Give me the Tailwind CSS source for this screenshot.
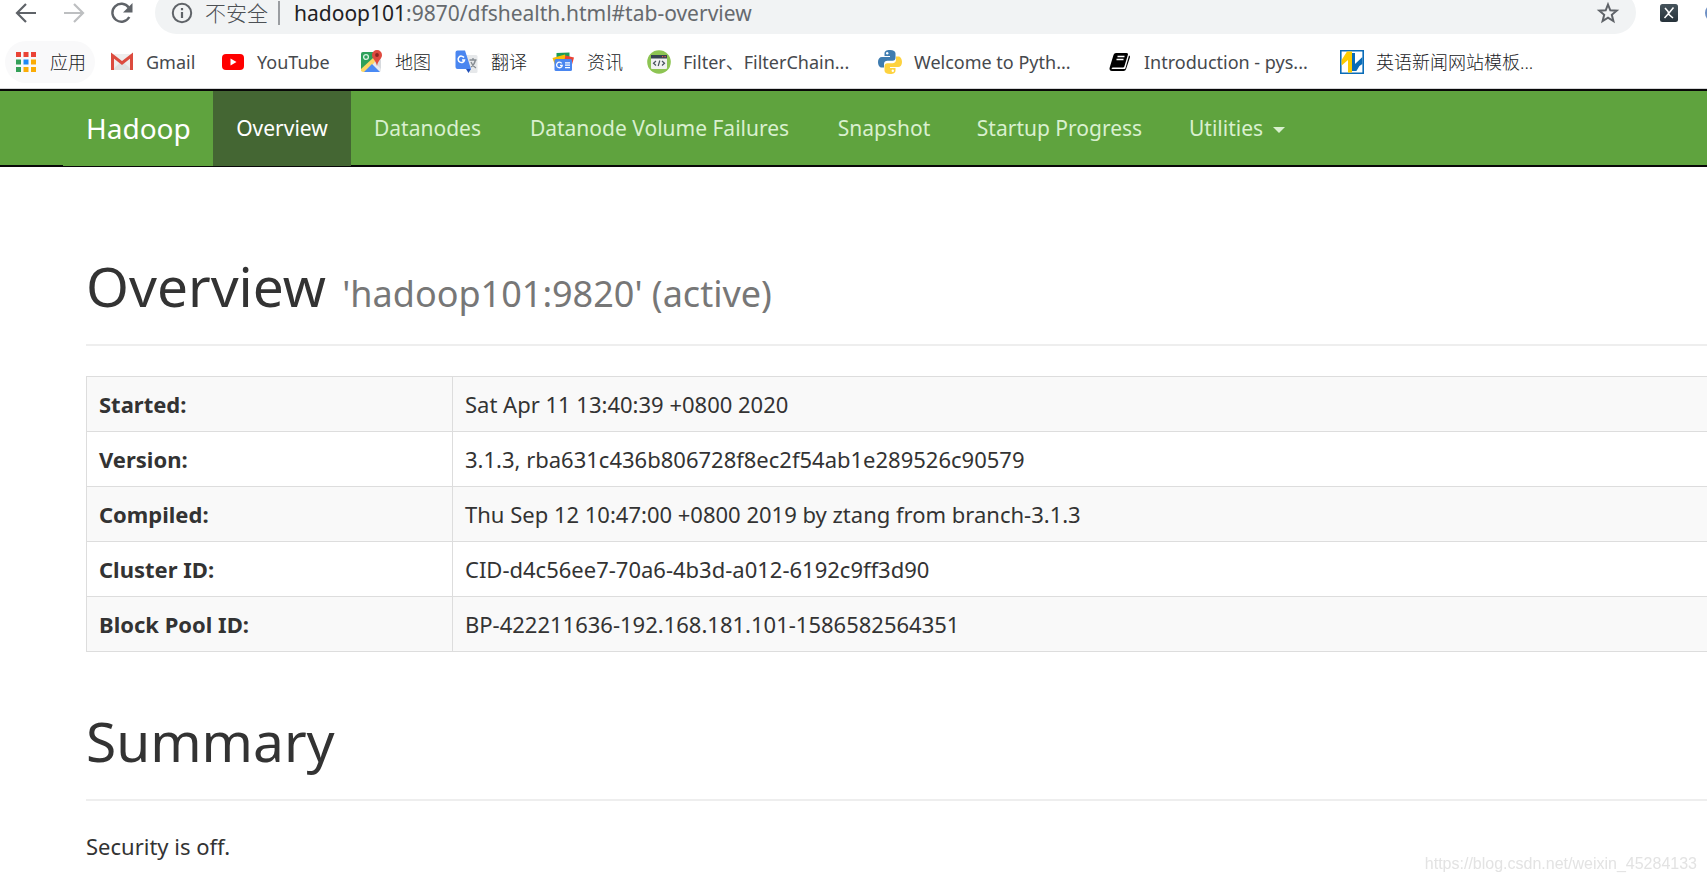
<!DOCTYPE html>
<html lang="en">
<head>
<meta charset="utf-8">
<title>Namenode information</title>
<script src="https://cdn.jsdelivr.net/npm/@tailwindcss/browser@4"></script>
</head>
<body class="min-h-screen overflow-x-hidden bg-white font-['Noto_Sans','Noto_Sans_CJK_SC',sans-serif] text-[21px] leading-[28px] text-[#333]">

<!-- Browser toolbar -->
<header class="overflow-hidden border-b border-[#d5d6d8]">
  <div class="flex h-[34px] items-end">
    <div class="flex h-[43px] w-[155px] shrink-0 items-center gap-6 pl-[14px]">
      <button aria-label="Back" class="size-6"><svg viewBox="0 0 24 24" class="size-6" fill="none" stroke="#5f6368" stroke-width="2.2"><path d="M22 12H3.500M12 3l-9 9 9 9"/></svg></button>
      <button aria-label="Forward" class="size-6"><svg viewBox="0 0 24 24" class="size-6" fill="none" stroke="#bdbfc1" stroke-width="2.200"><path d="M2 12h18.500M12 3l9 9-9 9"/></svg></button>
      <button aria-label="Reload" class="size-6"><svg viewBox="0 0 24 24" class="size-6"><path d="M19.300 16a9 9 0 1 1-.6-9.500" fill="none" stroke="#5f6368" stroke-width="2.400"/><path d="M22.500 2v9.500H13z" fill="#5f6368"/></svg></button>
    </div>
    <div class="flex h-[43px] flex-1 items-center rounded-full bg-[#f1f3f4] pl-4 pr-4">
      <svg viewBox="0 0 22 22" class="mr-3 size-[22px] shrink-0" fill="none" stroke="#5f6368" stroke-width="2"><circle cx="11" cy="11" r="9.200"/><path d="M11 10v6M11 6v2.200" stroke-width="2.200"/></svg>
      <span class="font-light text-[#4c5054]">不安全</span>
      <span class="mr-[14px] ml-[10px] h-6 w-[2px] bg-[#9a9da1]"></span>
      <span class="text-[#666a6e]"><span class="text-[#202124]">hadoop101</span>:9870/dfshealth.html#tab-overview</span>
      <button aria-label="Bookmark this page" class="ml-auto size-6"><svg viewBox="0 0 24 24" class="size-6" fill="none" stroke="#5f6368" stroke-width="2"><path d="M12 3.500l2.300 5.800 6.400.4-4.900 4.100 1.600 6.200-5.400-3.400-5.400 3.400 1.600-6.200-4.900-4.100 6.400-.4z"/></svg></button>
    </div>
    <div class="flex h-[43px] w-[71px] shrink-0 items-center justify-between overflow-hidden pl-6">
      <button aria-label="Extension" class="size-[18px]"><svg viewBox="0 0 18 18" class="size-[18px]"><defs><linearGradient id="xg" x2="0" y2="1"><stop stop-color="#46545c"/><stop offset="1" stop-color="#26323a"/></linearGradient></defs><rect width="18" height="18" rx="2.500" fill="url(#xg)"/><path d="M5 4l3 3.500 1 3 4 3.500M13.500 3.500L9 9l-4.500 5" fill="none" stroke="#fff" stroke-width="1.500"/></svg></button>
      <span class="-mr-4 size-[18px] rounded-full bg-[#6d8fc4]"></span>
    </div>
  </div>

  <!-- Bookmarks bar -->
  <nav aria-label="Bookmarks" class="grid h-[54px] grid-cols-[105px_111px_138px_96px_96px_96px_231px_230px_232px_1fr] items-center overflow-hidden whitespace-nowrap pl-[5px] pt-1 pb-[3px] text-[18px] leading-6 text-[#46494d]">
    <a href="#" class="flex h-[42px] w-[90px] items-center gap-3 rounded-full bg-[#f9f9fa] pl-[9px]">
      <svg viewBox="0 0 24 24" class="size-6 shrink-0"><g fill="#ea4335"><path d="M2 2h5v5H2zM9.500 2h5v5h-5zM17 2h5v5h-5z"/></g><path d="M2 9.500h5v5H2zM2 17h5v5H2z" fill="#34a058"/><path d="M9.500 9.500h5v5h-5z" fill="#1e88f5"/><path d="M17 9.500h5v5h-5zM17 17h5v5h-5zM9.500 17h5v5h-5z" fill="#fbac05"/></svg>
      <span class="font-light text-[#202124]">应用</span></a>
    <a href="#" class="flex items-center gap-3">
      <svg viewBox="0 0 24 24" class="size-6 shrink-0"><path d="M2 4h20v16H2z" fill="#eee"/><path d="M2 20L12 11l10 9z" fill="#e0e0e0"/><path d="M2.500 20V5.500L12 13l9.500-7.500V20" fill="none" stroke="#dc4b3e" stroke-width="3"/></svg>
      <span>Gmail</span></a>
    <a href="#" class="flex items-center gap-3">
      <svg viewBox="0 0 24 24" class="size-6 shrink-0"><rect x="1" y="4" width="22" height="16" rx="4" fill="#f00"/><path d="M9.500 8.500v7l6-3.500z" fill="#fff"/></svg>
      <span>YouTube</span></a>
    <a href="#" class="flex items-center gap-3">
      <svg viewBox="0 0 24 24" class="size-6 shrink-0"><rect x="2" y="2" width="20" height="20" rx="2" fill="#e8eaed"/><path d="M4 2h12l-2 7L2 21V4a2 2 0 0 1 2-2z" fill="#2da05a"/><path d="M2 19L14 8l3 3L6 22H4l-2-1z" fill="#fdd663"/><path d="M5 22l8-8 8 8z" fill="#4a8af4"/><path d="M15 12l7 7v-9z" fill="#d7dade"/><circle cx="7" cy="7" r="2.400" fill="none" stroke="#d9f2e1" stroke-width="1.300"/><path d="M18 0a5 5 0 0 1 5 5c0 4-4 5-5 11-1-6-5-7-5-11a5 5 0 0 1 5-5z" fill="#e04a3f"/><circle cx="18" cy="5" r="1.900" fill="#8c2820"/></svg>
      <span class="font-light text-[#202124]">地图</span></a>
    <a href="#" class="flex items-center gap-3">
      <svg viewBox="0 0 24 24" class="size-6 shrink-0"><path d="M10 5h11a1.500 1.500 0 0 1 1.500 1.500v15A1.500 1.500 0 0 1 21 23h-6z" fill="#e6e8ea"/><path d="M14.500 10h7M18 8v2M20.500 10c-1 4-3 6-4.500 7M16 12c1 3 3 5 5 6" stroke="#858b91" stroke-width="1.300" fill="none"/><path d="M2.500.500H10L16 19H2.500A2 2 0 0 1 .500 17V2.500a2 2 0 0 1 2-2z" fill="#4a86f0"/><path d="M11 19h5l-2.500 4z" fill="#2350b8"/><path d="M9 7.500A3.200 3.200 0 1 0 9.500 10H7" fill="none" stroke="#fff" stroke-width="1.500"/></svg>
      <span class="font-light text-[#202124]">翻译</span></a>
    <a href="#" class="flex items-center gap-3">
      <svg viewBox="0 0 24 24" class="size-6 shrink-0"><path d="M5.500 3l13-.5V9h-13z" fill="#1c9d57"/><path d="M1.500 8L14 4.500 16 12 4 15z" fill="#fbbc04"/><path d="M14.500 5.500l8.500 2-2 7-8-3z" fill="#ea4335"/><rect x="3.500" y="9" width="17.500" height="12" rx="1.500" fill="#4a86f0"/><path d="M10.700 13.300A2.800 2.800 0 1 0 11.200 15.300H9M14 12.800h5M14 15.200h5M14 17.600h5" fill="none" stroke="#fff" stroke-width="1.300"/></svg>
      <span class="font-light text-[#202124]">资讯</span></a>
    <a href="#" class="flex items-center gap-3">
      <svg viewBox="0 0 24 24" class="size-6 shrink-0"><circle cx="12" cy="12" r="11.800" fill="#8dc453"/><rect x="4" y="5" width="16" height="14" rx="1" fill="#f1f1f1"/><path d="M4 5h16v3.500H4z" fill="#364350"/><path d="M15 6.700h1.200M17.500 6.700h1.200" stroke="#e96050" stroke-width="1.200"/><path d="M9 11l-2.500 2.200L9 15.500M15 11l2.500 2.200L15 15.500M12.800 10.500l-1.600 5.500" fill="none" stroke="#48535f" stroke-width="1.200"/></svg>
      <span>Filter、FilterChain...</span></a>
    <a href="#" class="flex items-center gap-3">
      <svg viewBox="0 0 24 24" class="size-6 shrink-0"><path d="M12 0C8 0 6.500 1.500 6.500 3.500V6H12v1H4C1.500 7 0 9 0 12s1.500 5.500 3.500 5.500H6V14c0-2 1.500-3.200 3.500-3.200h5c2 0 3-1.300 3-3V3.500C17.500 1.200 15.500 0 12 0z" fill="#3f7cb0"/><path d="M12 24c4 0 5.500-1.500 5.500-3.500V18H12v-1h8c2.500 0 4-2 4-5s-1.500-5.500-3.500-5.500H18V10c0 2-1.500 3.200-3.500 3.200h-5c-2 0-3 1.300-3 3v4.300C6.500 22.800 8.500 24 12 24z" fill="#fdd23f"/><circle cx="9.200" cy="3.300" r="1.200" fill="#fff"/><circle cx="14.800" cy="20.700" r="1.200" fill="#fff"/></svg>
      <span>Welcome to Pyth...</span></a>
    <a href="#" class="flex items-center gap-3">
      <svg viewBox="0 0 24 24" class="size-6 shrink-0"><path d="M8 3h10.500c1.200 0 1.700.8 1.400 1.800L16.500 16c-.3 1-1 1.500-2 1.500H5c-1.500 0-2 1.600-.5 1.600h11.500c.8 0 1.300-.4 1.500-1.200L21 5.500c.9.400 1.200 1 .9 2L18.100 19c-.4 1.200-1.300 2-2.600 2H4c-2 0-3-1.600-2.300-3.500L5.500 5C6 3.700 6.800 3 8 3z"/><path d="M9.500 6.500h7M8.500 9.500h7" stroke="#fff" stroke-width="1.300"/></svg>
      <span>Introduction - pys...</span></a>
    <a href="#" class="flex items-center gap-3">
      <svg viewBox="0 0 24 24" class="size-6 shrink-0"><path d="M.8.800h22.400v22.400H.8z" fill="#fff" stroke="#0a6cb8" stroke-width="1.600"/><path d="M7 1.600h5v21H8V10l-6.400 5.500V10z" fill="#fccb00"/><path d="M12 3h3v11l7.400-7v7l-3 2-3 5H12z" fill="#0a6cb8"/></svg>
      <span class="font-light text-[#202124]">英语新闻网站模板...</span></a>
  </nav>
</header>

<!-- Hadoop navigation -->
<nav aria-label="Main" class="flex h-[78px] whitespace-nowrap border-y-2 border-[#080808] bg-[#5fa33e] pl-[63px] text-[#d9f0cf]">
  <a href="#" class="-mb-px flex w-[150px] items-center bg-[#5fa33e] pb-[2px] pl-[23px] text-[28px] text-white">Hadoop</a>
  <ul class="-mb-px flex">
    <li class="flex w-[138px]"><a href="#" class="flex flex-1 items-center justify-center bg-[#446633] pb-[2px] text-white">Overview</a></li>
    <li class="flex w-[153px]"><a href="#" class="flex flex-1 items-center justify-center pb-[2px]">Datanodes</a></li>
    <li class="flex w-[311px]"><a href="#" class="flex flex-1 items-center justify-center pb-[2px]">Datanode Volume Failures</a></li>
    <li class="flex w-[138px]"><a href="#" class="flex flex-1 items-center justify-center pb-[2px]">Snapshot</a></li>
    <li class="flex w-[213px]"><a href="#" class="flex flex-1 items-center justify-center pb-[2px]">Startup Progress</a></li>
    <li class="flex w-[142px]"><button class="flex flex-1 items-center justify-center gap-[10px] pb-[2px]">Utilities <svg viewBox="0 0 12 6" class="mt-1 h-[6px] w-3" fill="currentColor"><path d="M0 0h12L6 6z"/></svg></button></li>
  </ul>
</nav>

<main class="pl-[86px] text-[22px]">
  <h1 class="mt-[85px] border-b-2 border-[#eee] pb-6 text-[55px] leading-[68px]">Overview <small class="ml-[2px] text-[36px] leading-none text-[#777]">'hadoop101:9820' (active)</small></h1>

  <table class="mt-[30px] w-full border-collapse border border-r-0 border-[#ddd] text-left">
    <tbody>
      <tr class="h-[55px] border-b border-[#ddd] bg-[#f9f9f9]"><th class="w-[366px] border-r border-[#ddd] px-3">Started:</th><td class="px-3">Sat Apr 11 13:40:39 +0800 2020</td></tr>
      <tr class="h-[55px] border-b border-[#ddd]"><th class="border-r border-[#ddd] px-3">Version:</th><td class="px-3">3.1.3, rba631c436b806728f8ec2f54ab1e289526c90579</td></tr>
      <tr class="h-[55px] border-b border-[#ddd] bg-[#f9f9f9]"><th class="border-r border-[#ddd] px-3">Compiled:</th><td class="px-3">Thu Sep 12 10:47:00 +0800 2019 by ztang from branch-3.1.3</td></tr>
      <tr class="h-[55px] border-b border-[#ddd]"><th class="border-r border-[#ddd] px-3">Cluster ID:</th><td class="px-3">CID-d4c56ee7-70a6-4b3d-a012-6192c9ff3d90</td></tr>
      <tr class="h-[55px] border-b border-[#ddd] bg-[#f9f9f9]"><th class="border-r border-[#ddd] px-3">Block Pool ID:</th><td class="px-3">BP-422211636-192.168.181.101-1586582564351</td></tr>
    </tbody>
  </table>

  <h1 class="mt-[55px] border-b-2 border-[#eee] pb-6 text-[55px] leading-[68px]">Summary</h1>
  <p class="mt-[31px]">Security is off.</p>
</main>

<div class="fixed right-[10px] bottom-2 font-['Liberation_Sans',sans-serif] text-[16px] leading-5 text-[#e3e3e3]">https://blog.csdn.net/weixin_45284133</div>
</body>
</html>
